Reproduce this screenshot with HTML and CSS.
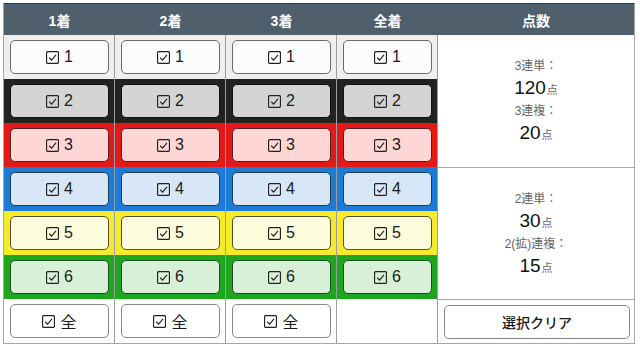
FILE: index.html
```html
<!DOCTYPE html>
<html lang="ja">
<head>
<meta charset="utf-8">
<link rel="stylesheet" href="styles.css">
</head>
<body>
<div class="board">
  <div class="hd">1着</div>
  <div class="hd">2着</div>
  <div class="hd">3着</div>
  <div class="hd">全着</div>
  <div class="hd">点数</div>

  <div class="cell r1"><button class="btn"><svg class="ck" viewBox="0 0 12 12"><rect x="0.5" y="0.5" width="11" height="11" rx="1.2"/><path d="M3 6.2 L5.2 8.4 L9.2 3.6"/></svg>1</button></div>
  <div class="cell r1"><button class="btn"><svg class="ck" viewBox="0 0 12 12"><rect x="0.5" y="0.5" width="11" height="11" rx="1.2"/><path d="M3 6.2 L5.2 8.4 L9.2 3.6"/></svg>1</button></div>
  <div class="cell r1"><button class="btn"><svg class="ck" viewBox="0 0 12 12"><rect x="0.5" y="0.5" width="11" height="11" rx="1.2"/><path d="M3 6.2 L5.2 8.4 L9.2 3.6"/></svg>1</button></div>
  <div class="cell r1"><button class="btn"><svg class="ck" viewBox="0 0 12 12"><rect x="0.5" y="0.5" width="11" height="11" rx="1.2"/><path d="M3 6.2 L5.2 8.4 L9.2 3.6"/></svg>1</button></div>
  <div class="pts pts-a">
    <div class="lbl">3連単：</div>
    <div class="num">120<span class="unit">点</span></div>
    <div class="lbl">3連複：</div>
    <div class="num">20<span class="unit">点</span></div>
  </div>

  <div class="cell r2"><button class="btn"><svg class="ck" viewBox="0 0 12 12"><rect x="0.5" y="0.5" width="11" height="11" rx="1.2"/><path d="M3 6.2 L5.2 8.4 L9.2 3.6"/></svg>2</button></div>
  <div class="cell r2"><button class="btn"><svg class="ck" viewBox="0 0 12 12"><rect x="0.5" y="0.5" width="11" height="11" rx="1.2"/><path d="M3 6.2 L5.2 8.4 L9.2 3.6"/></svg>2</button></div>
  <div class="cell r2"><button class="btn"><svg class="ck" viewBox="0 0 12 12"><rect x="0.5" y="0.5" width="11" height="11" rx="1.2"/><path d="M3 6.2 L5.2 8.4 L9.2 3.6"/></svg>2</button></div>
  <div class="cell r2"><button class="btn"><svg class="ck" viewBox="0 0 12 12"><rect x="0.5" y="0.5" width="11" height="11" rx="1.2"/><path d="M3 6.2 L5.2 8.4 L9.2 3.6"/></svg>2</button></div>

  <div class="cell r3"><button class="btn"><svg class="ck" viewBox="0 0 12 12"><rect x="0.5" y="0.5" width="11" height="11" rx="1.2"/><path d="M3 6.2 L5.2 8.4 L9.2 3.6"/></svg>3</button></div>
  <div class="cell r3"><button class="btn"><svg class="ck" viewBox="0 0 12 12"><rect x="0.5" y="0.5" width="11" height="11" rx="1.2"/><path d="M3 6.2 L5.2 8.4 L9.2 3.6"/></svg>3</button></div>
  <div class="cell r3"><button class="btn"><svg class="ck" viewBox="0 0 12 12"><rect x="0.5" y="0.5" width="11" height="11" rx="1.2"/><path d="M3 6.2 L5.2 8.4 L9.2 3.6"/></svg>3</button></div>
  <div class="cell r3"><button class="btn"><svg class="ck" viewBox="0 0 12 12"><rect x="0.5" y="0.5" width="11" height="11" rx="1.2"/><path d="M3 6.2 L5.2 8.4 L9.2 3.6"/></svg>3</button></div>

  <div class="cell r4"><button class="btn"><svg class="ck" viewBox="0 0 12 12"><rect x="0.5" y="0.5" width="11" height="11" rx="1.2"/><path d="M3 6.2 L5.2 8.4 L9.2 3.6"/></svg>4</button></div>
  <div class="cell r4"><button class="btn"><svg class="ck" viewBox="0 0 12 12"><rect x="0.5" y="0.5" width="11" height="11" rx="1.2"/><path d="M3 6.2 L5.2 8.4 L9.2 3.6"/></svg>4</button></div>
  <div class="cell r4"><button class="btn"><svg class="ck" viewBox="0 0 12 12"><rect x="0.5" y="0.5" width="11" height="11" rx="1.2"/><path d="M3 6.2 L5.2 8.4 L9.2 3.6"/></svg>4</button></div>
  <div class="cell r4"><button class="btn"><svg class="ck" viewBox="0 0 12 12"><rect x="0.5" y="0.5" width="11" height="11" rx="1.2"/><path d="M3 6.2 L5.2 8.4 L9.2 3.6"/></svg>4</button></div>
  <div class="pts pts-b">
    <div class="lbl">2連単：</div>
    <div class="num">30<span class="unit">点</span></div>
    <div class="lbl">2(拡)連複：</div>
    <div class="num">15<span class="unit">点</span></div>
  </div>

  <div class="cell r5"><button class="btn"><svg class="ck" viewBox="0 0 12 12"><rect x="0.5" y="0.5" width="11" height="11" rx="1.2"/><path d="M3 6.2 L5.2 8.4 L9.2 3.6"/></svg>5</button></div>
  <div class="cell r5"><button class="btn"><svg class="ck" viewBox="0 0 12 12"><rect x="0.5" y="0.5" width="11" height="11" rx="1.2"/><path d="M3 6.2 L5.2 8.4 L9.2 3.6"/></svg>5</button></div>
  <div class="cell r5"><button class="btn"><svg class="ck" viewBox="0 0 12 12"><rect x="0.5" y="0.5" width="11" height="11" rx="1.2"/><path d="M3 6.2 L5.2 8.4 L9.2 3.6"/></svg>5</button></div>
  <div class="cell r5"><button class="btn"><svg class="ck" viewBox="0 0 12 12"><rect x="0.5" y="0.5" width="11" height="11" rx="1.2"/><path d="M3 6.2 L5.2 8.4 L9.2 3.6"/></svg>5</button></div>

  <div class="cell r6"><button class="btn"><svg class="ck" viewBox="0 0 12 12"><rect x="0.5" y="0.5" width="11" height="11" rx="1.2"/><path d="M3 6.2 L5.2 8.4 L9.2 3.6"/></svg>6</button></div>
  <div class="cell r6"><button class="btn"><svg class="ck" viewBox="0 0 12 12"><rect x="0.5" y="0.5" width="11" height="11" rx="1.2"/><path d="M3 6.2 L5.2 8.4 L9.2 3.6"/></svg>6</button></div>
  <div class="cell r6"><button class="btn"><svg class="ck" viewBox="0 0 12 12"><rect x="0.5" y="0.5" width="11" height="11" rx="1.2"/><path d="M3 6.2 L5.2 8.4 L9.2 3.6"/></svg>6</button></div>
  <div class="cell r6"><button class="btn"><svg class="ck" viewBox="0 0 12 12"><rect x="0.5" y="0.5" width="11" height="11" rx="1.2"/><path d="M3 6.2 L5.2 8.4 L9.2 3.6"/></svg>6</button></div>

  <div class="cell r7"><button class="btn"><svg class="ck" viewBox="0 0 12 12"><rect x="0.5" y="0.5" width="11" height="11" rx="1.2"/><path d="M3 6.2 L5.2 8.4 L9.2 3.6"/></svg>全</button></div>
  <div class="cell r7"><button class="btn"><svg class="ck" viewBox="0 0 12 12"><rect x="0.5" y="0.5" width="11" height="11" rx="1.2"/><path d="M3 6.2 L5.2 8.4 L9.2 3.6"/></svg>全</button></div>
  <div class="cell r7"><button class="btn"><svg class="ck" viewBox="0 0 12 12"><rect x="0.5" y="0.5" width="11" height="11" rx="1.2"/><path d="M3 6.2 L5.2 8.4 L9.2 3.6"/></svg>全</button></div>
  <div class="cell r7"></div>
  <div class="cell last r7"><button class="btn clear">選択クリア</button></div>
</div>
</body>
</html>
```

FILE: styles.css
```css
html, body {
  margin: 0;
  padding: 0;
  background: #ffffff;
}
body {
  padding: 3px 0 0 3px;
  font-family: "Liberation Sans", "Noto Sans CJK JP", sans-serif;
}
.board {
  width: 630px;
  display: grid;
  grid-template-columns: 111px 111px 111px 101px 196px;
  grid-template-rows: 31px repeat(7, 44px);
  border: 1px solid #a4a8ac;
  border-top: 1px solid #1f4656;
}
.hd {
  background: #4f5f6c;
  color: #ffffff;
  font-weight: bold;
  font-size: 14px;
  display: flex;
  align-items: center;
  justify-content: center;
}
.cell {
  border-right: 1px solid #9a9ea2;
  padding: 5px 5px 5px 6px;
  display: flex;
}
.cell.last {
  border-right: none;
  border-top: 1px solid #a4a8ac;
  padding: 5px 4px 4px 6px;
}
.btn {
  flex: 1;
  margin: 0;
  display: flex;
  align-items: center;
  justify-content: center;
  gap: 5px;
  border: 1px solid #555555;
  border-radius: 5px;
  background: #fdfdfd;
  color: #1a1a1a;
  font-family: "Liberation Sans", "Noto Sans CJK JP", sans-serif;
  font-size: 16px;
  padding: 0;
}
.ck {
  width: 13px;
  height: 13px;
  fill: none;
  stroke: #222222;
  stroke-width: 1.1;
}
.r1 { background: #efefef; }
.r1 .btn { background: #fcfcfc; border-color: #6a6a6a; }
.r2 { background: #222222; }
.r2 .btn { background: #d4d4d4; border-color: #111111; }
.r3 { background: #e31818; }
.r3 .btn { background: #ffd6d6; border-color: #5a2020; }
.r4 { background: #1d7bd3; }
.r4 .btn { background: #d8e7f8; border-color: #203a55; }
.r5 { background: #f6ea2c; }
.r5 .btn { background: #fdfcdc; border-color: #55502a; }
.r6 { background: #20a520; }
.r6 .btn { background: #d8efd8; border-color: #1f4a1f; }
.r7 { background: #ffffff; }
.r7 .btn { background: #ffffff; border-color: #888888; }
.btn.clear {
  font-size: 14px;
  font-weight: 500;
  border-color: #888888;
}
.pts {
  grid-column: 5;
  grid-row: span 3;
  background: #ffffff;
  display: flex;
  flex-direction: column;
  align-items: center;
  justify-content: center;
  gap: 0;
}
.pts-b {
  border-top: 1px solid #a4a8ac;
}
.lbl {
  font-size: 12px;
  color: #666666;
  line-height: 21px;
}
.num {
  font-size: 19px;
  color: #111111;
  line-height: 22px;
}
.unit {
  font-size: 11px;
  color: #666666;
  margin-left: 1px;
}
```
